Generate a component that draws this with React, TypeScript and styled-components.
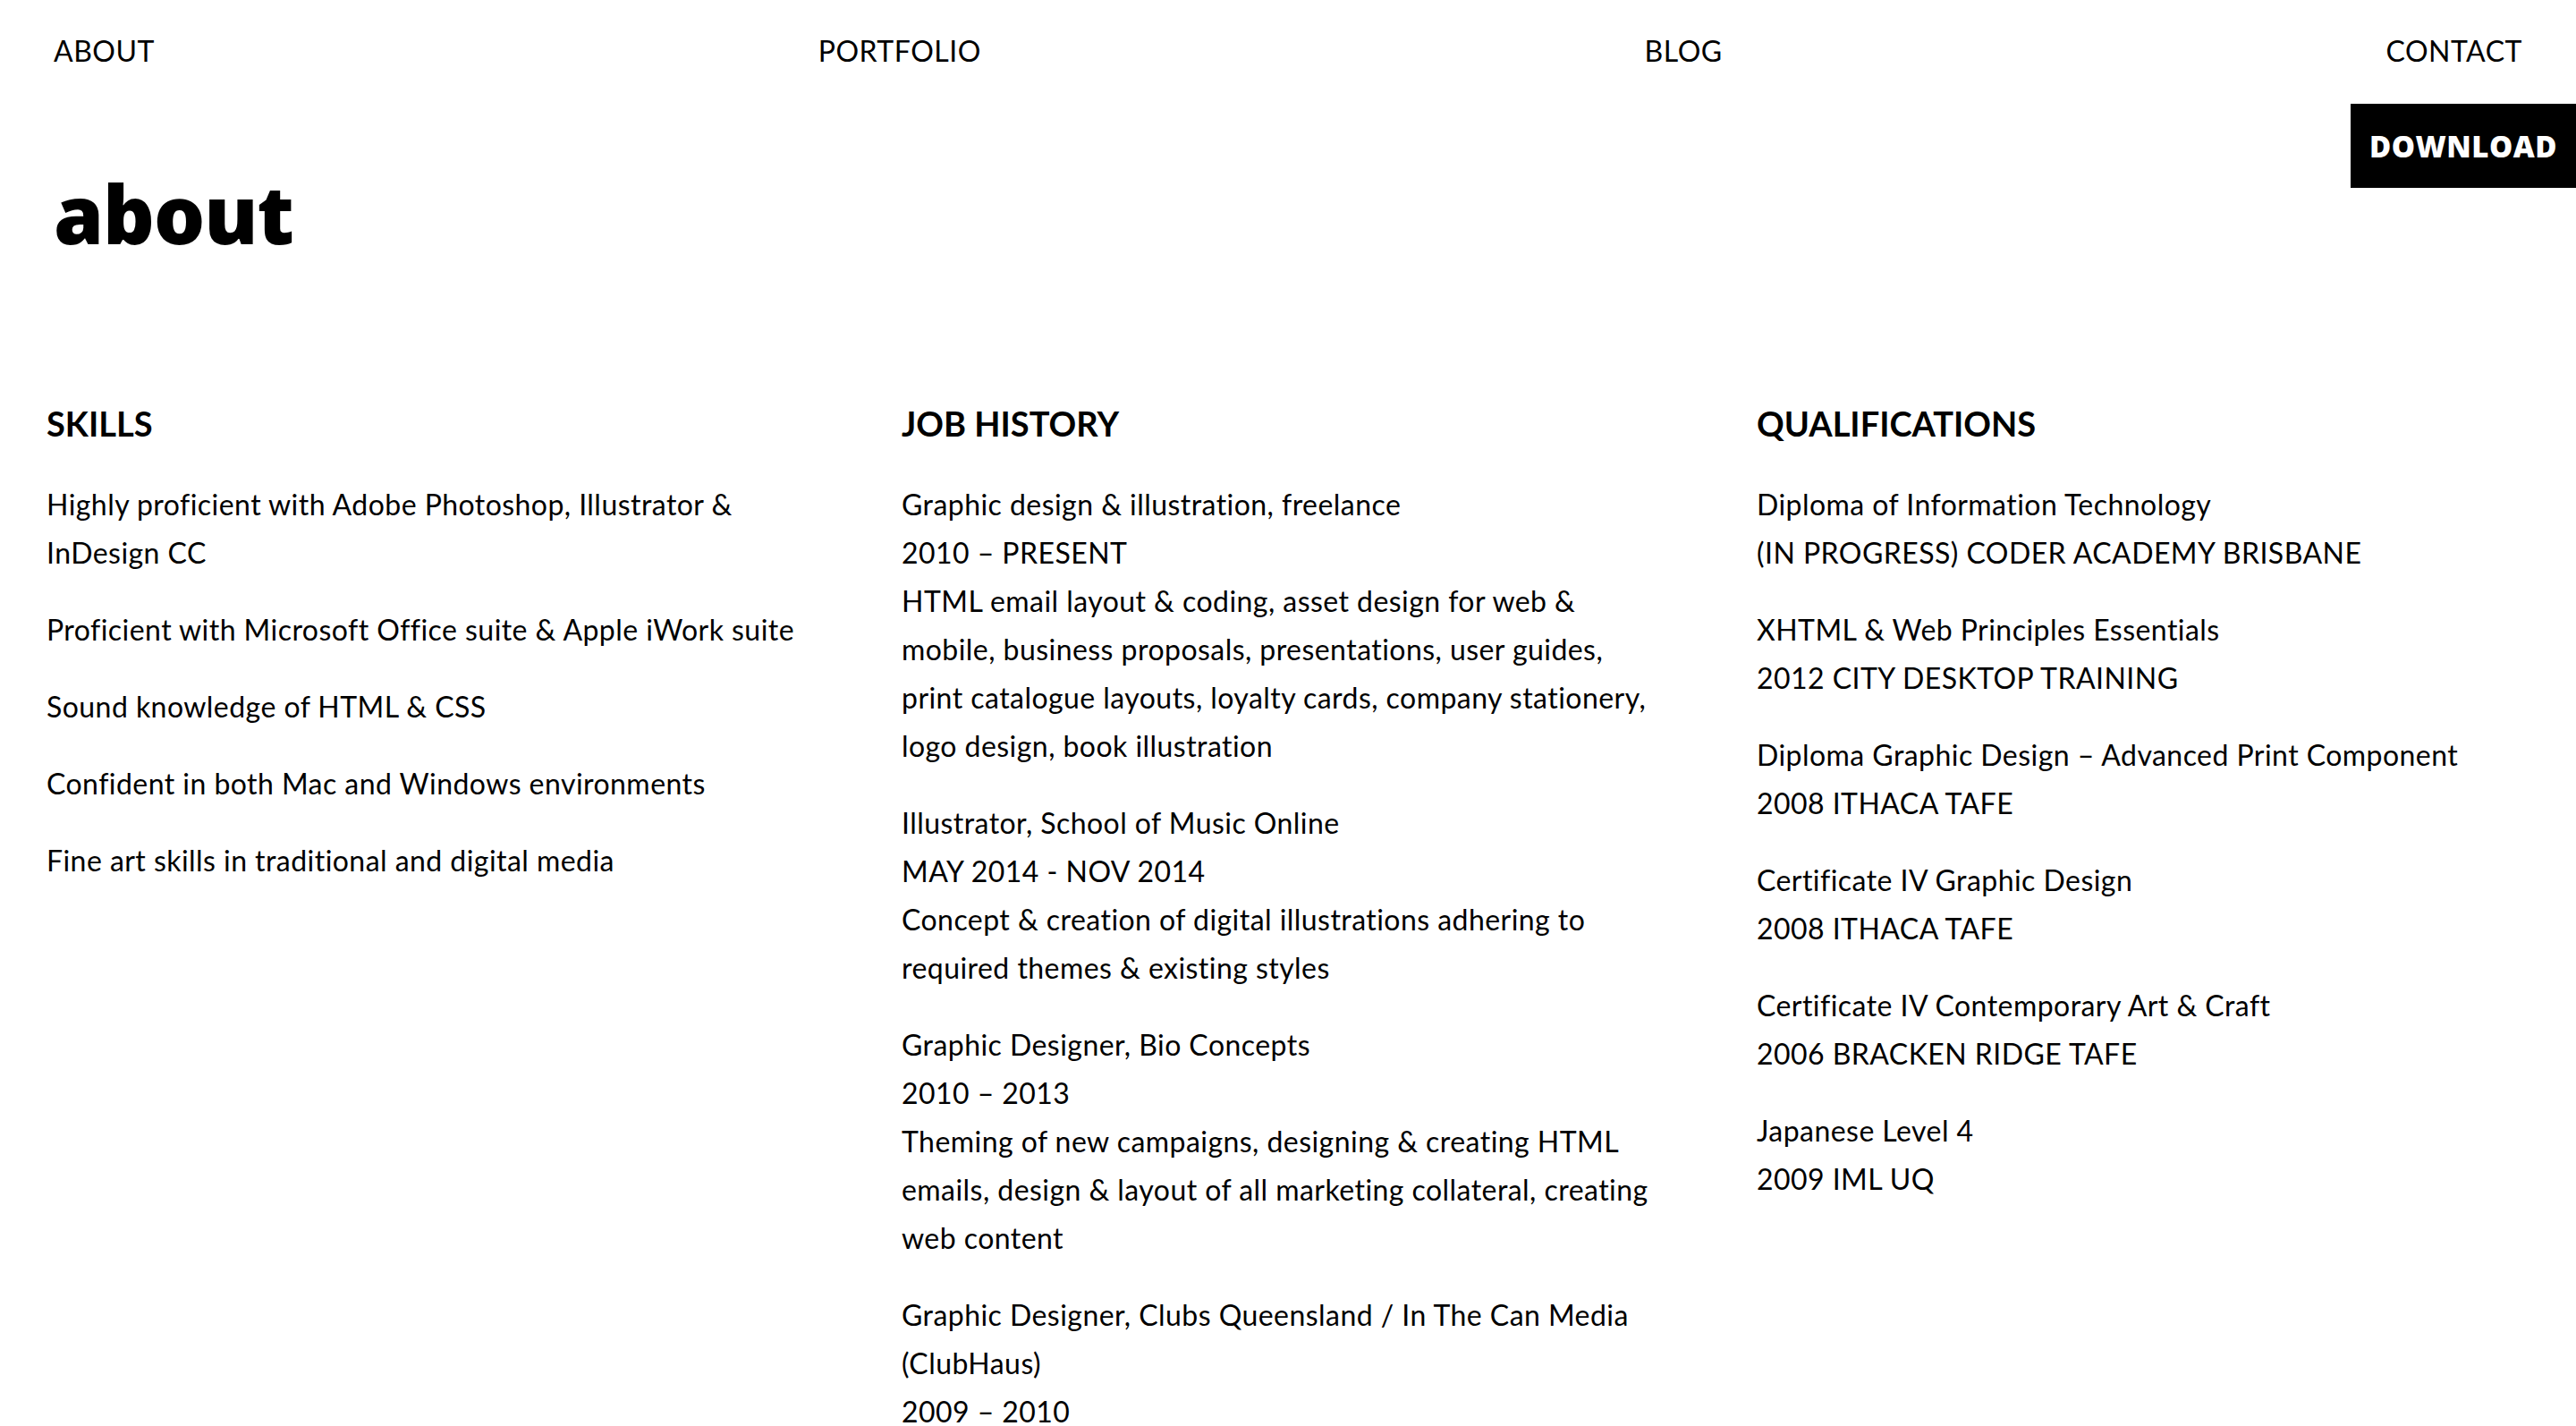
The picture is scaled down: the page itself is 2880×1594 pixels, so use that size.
import React from "react";
import styled, { createGlobalStyle } from "styled-components";

const Global = createGlobalStyle`
  html, body { margin: 0; padding: 0; background: #fff; }
  body { font-family: "Lato", "Liberation Sans", sans-serif; color: #000; }
  * { box-sizing: border-box; }
`;

const Page = styled.div`
  width: 2880px;
  min-height: 1594px;
  background: #fff;
`;

const Nav = styled.nav`
  display: flex;
  justify-content: space-between;
  align-items: center;
  padding: 40px 60px 0 60px;
`;

const NavLink = styled.a`
  font-family: "Lato", sans-serif;
  font-size: 32px;
  line-height: 34px;
  font-weight: 400;
  color: #000;
  text-decoration: none;
  text-transform: uppercase;
  letter-spacing: 0.5px;
`;

const Header = styled.header`
  display: flex;
  justify-content: space-between;
  align-items: flex-start;
  margin-top: 42px;
`;

const Title = styled.h1`
  margin: 77px 0 0 60px;
  font-family: "Open Sans", sans-serif;
  font-weight: 800;
  font-size: 90px;
  line-height: 1;
  letter-spacing: -1px;
`;

const DownloadButton = styled.a`
  display: flex;
  align-items: center;
  justify-content: center;
  width: 252px;
  height: 94px;
  background: #000;
  color: #fff;
  font-family: "Open Sans", sans-serif;
  font-weight: 800;
  font-size: 33px;
  letter-spacing: 0.5px;
  text-decoration: none;
`;

const Columns = styled.main`
  display: grid;
  grid-template-columns: repeat(3, 1fr);
  column-gap: 92px;
  padding: 0 52px;
  margin-top: 166px;
`;

const Column = styled.section`
  display: flex;
  flex-direction: column;
  padding-right: 19px;
`;

const ColumnTitle = styled.h2`
  margin: 0 0 40px 0;
  font-family: "Lato", sans-serif;
  font-weight: 700;
  font-size: 38px;
  line-height: 48px;
  text-transform: uppercase;
`;

const Entry = styled.p`
  margin: 0 0 32px 0;
  font-size: 32px;
  line-height: 54px;
  font-weight: 400;
  letter-spacing: 0.45px;
`;

const skills = [
  "Highly proficient with Adobe Photoshop, Illustrator & InDesign CC",
  "Proficient with Microsoft Office suite & Apple iWork suite",
  "Sound knowledge of HTML & CSS",
  "Confident in both Mac and Windows environments",
  "Fine art skills in traditional and digital media",
];

const jobs: string[][] = [
  [
    "Graphic design & illustration, freelance",
    "2010 – PRESENT",
    "HTML email layout & coding, asset design for web & mobile, business proposals, presentations, user guides, print catalogue layouts, loyalty cards, company stationery, logo design, book illustration",
  ],
  [
    "Illustrator, School of Music Online",
    "MAY 2014 - NOV 2014",
    "Concept & creation of digital illustrations adhering to required themes & existing styles",
  ],
  [
    "Graphic Designer, Bio Concepts",
    "2010 – 2013",
    "Theming of new campaigns, designing & creating HTML emails, design & layout of all marketing collateral, creating web content",
  ],
  [
    "Graphic Designer, Clubs Queensland / In The Can Media (ClubHaus)",
    "2009 – 2010",
    "Design & layout of member publications, advertising & promotional material",
  ],
];

const quals: string[][] = [
  ["Diploma of Information Technology", "(IN PROGRESS) CODER ACADEMY BRISBANE"],
  ["XHTML & Web Principles Essentials", "2012 CITY DESKTOP TRAINING"],
  ["Diploma Graphic Design – Advanced Print Component", "2008 ITHACA TAFE"],
  ["Certificate IV Graphic Design", "2008 ITHACA TAFE"],
  ["Certificate IV Contemporary Art & Craft", "2006 BRACKEN RIDGE TAFE"],
  ["Japanese Level 4", "2009 IML UQ"],
];

const Lines: React.FC<{ lines: string[] }> = ({ lines }) => (
  <Entry>
    {lines.map((l, i) => (
      <React.Fragment key={i}>
        {i > 0 && <br />}
        {l}
      </React.Fragment>
    ))}
  </Entry>
);

export default function App() {
  return (
    <Page>
      <Global />
      <Nav>
        <NavLink href="#">About</NavLink>
        <NavLink href="#">Portfolio</NavLink>
        <NavLink href="#">Blog</NavLink>
        <NavLink href="#">Contact</NavLink>
      </Nav>
      <Header>
        <Title>about</Title>
        <DownloadButton href="#">DOWNLOAD</DownloadButton>
      </Header>
      <Columns>
        <Column>
          <ColumnTitle>Skills</ColumnTitle>
          {skills.map((s) => (
            <Entry key={s}>{s}</Entry>
          ))}
        </Column>
        <Column>
          <ColumnTitle>Job History</ColumnTitle>
          {jobs.map((j) => (
            <Lines key={j[0]} lines={j} />
          ))}
        </Column>
        <Column>
          <ColumnTitle>Qualifications</ColumnTitle>
          {quals.map((q) => (
            <Lines key={q[0]} lines={q} />
          ))}
        </Column>
      </Columns>
    </Page>
  );
}
